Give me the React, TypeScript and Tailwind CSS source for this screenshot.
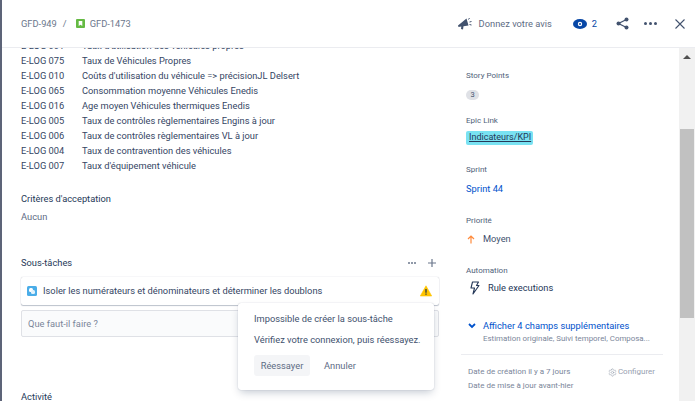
import { Settings } from "lucide-react";

const rows = [
  ["E-LOG 001", "Taux d'utilisation des véhicules propres"],
  ["E-LOG 075", "Taux de Véhicules Propres"],
  ["E-LOG 010", "Coûts d'utilisation du véhicule => précisionJL Delsert"],
  ["E-LOG 065", "Consommation moyenne Véhicules Enedis"],
  ["E-LOG 016", "Age moyen Véhicules thermiques Enedis"],
  ["E-LOG 005", "Taux de contrôles règlementaires Engins à jour"],
  ["E-LOG 006", "Taux de contrôles règlementaires VL à jour"],
  ["E-LOG 004", "Taux de contravention des véhicules"],
  ["E-LOG 007", "Taux d'équipement véhicule"],
];

const FieldLabel = ({ children }: { children: React.ReactNode }) => (
  <div className="text-[8px] leading-[12px] text-[#505f79]">{children}</div>
);

export default function App() {
  return (
    <div className="w-[695px] h-[401px] overflow-hidden flex bg-[#5d6478] font-['Roboto',sans-serif] text-[9.3px] text-[#172b4d]">
      {/* Modal */}
      <div className="ml-[2px] flex-1 flex flex-col bg-white min-w-0">
        {/* Header */}
        <header className="h-[48px] shrink-0 flex items-center pl-[19px] pr-[10px] border-b border-[#ebecf0] bg-white relative z-10">
          <span className="text-[#6b778c]">GFD-949</span>
          <span className="text-[#6b778c] ml-[6px] mr-[9px]">/</span>
          <svg width="9" height="9" viewBox="0 0 9 9" className="mr-[5px]">
            <rect width="9" height="9" rx="1" fill="#65ba43" />
            <path d="M2.700 2h3.600v5L4.500 5.700 2.700 7z" fill="white" />
          </svg>
          <span className="text-[#6b778c]">GFD-1473</span>
          <div className="ml-auto flex items-center">
            <svg width="14" height="13" viewBox="0 0 14 13" className="mr-[7px]">
              <path d="M0 8.500L8.500 1.500 10.500 8.500 5.500 9.300 5 12.500 3 12 3.300 9.600 0.500 10z" fill="#42526e" />
              <path d="M10.500 2.500l1-1.500M11.500 5l2-.5M11.500 7.500l2 .5" stroke="#42526e" fill="none" />
            </svg>
            <span className="text-[#5e6c84]">Donnez votre avis</span>
            <svg width="14" height="10" viewBox="0 0 14 10" className="ml-[21px] mr-[5px]">
              <ellipse cx="7" cy="5" rx="7" ry="5" fill="#0747a6" />
              <circle cx="7" cy="5" r="2.200" fill="white" />
              <circle cx="7" cy="5" r="1" fill="#0747a6" />
            </svg>
            <span className="text-[#0747a6]">2</span>
            <svg width="13" height="13" viewBox="0 0 13 13" className="ml-[19px]">
              <path d="M10.500 2.500L2.500 6.500l8 4" stroke="#42526e" fill="none" strokeWidth="1.300" />
              <circle cx="10.500" cy="2.500" r="2" fill="#42526e" />
              <circle cx="2.500" cy="6.500" r="2" fill="#42526e" />
              <circle cx="10.500" cy="10.500" r="2" fill="#42526e" />
            </svg>
            <div className="ml-[15px] flex gap-[2px]">
              <span className="w-[3px] h-[3px] rounded-full bg-[#42526e]" />
              <span className="w-[3px] h-[3px] rounded-full bg-[#42526e]" />
              <span className="w-[3px] h-[3px] rounded-full bg-[#42526e]" />
            </div>
            <svg width="10" height="10" viewBox="0 0 10 10" className="ml-[18px]">
              <path d="M0.500 0.500l9 9M9.500 0.500l-9 9" stroke="#42526e" strokeWidth="1.100" fill="none" />
            </svg>
          </div>
        </header>

        {/* Body */}
        <div className="flex-1 min-h-0 flex overflow-hidden">
          <main className="w-[440px] shrink-0 pl-[19px] overflow-hidden relative">
            <div className="-mt-[10px]">
              {rows.map(([code, label]) => (
                <div key={code} className="flex h-[15px] items-center leading-[15px] text-[#344563]">
                  <span className="w-[61px]">{code}</span>
                  <span>{label}</span>
                </div>
              ))}
            </div>

            <h3 className="mt-[19px] leading-[14px] text-[#253858]">Critères d'acceptation</h3>
            <p className="mt-[4px] leading-[14px] text-[#5e6c84]">Aucun</p>

            <div className="mt-[32px] w-[418px] flex items-center">
              <h3 className="leading-[14px] text-[#253858]">Sous-tâches</h3>
              <div className="ml-auto flex items-center">
                <div className="flex gap-[1px]">
                  <span className="w-[2px] h-[2px] rounded-full bg-[#6b778c]" />
                  <span className="w-[2px] h-[2px] rounded-full bg-[#6b778c]" />
                  <span className="w-[2px] h-[2px] rounded-full bg-[#6b778c]" />
                </div>
                <svg width="8" height="8" viewBox="0 0 8 8" className="ml-[12px] mr-[3px]">
                  <path d="M4 0v8M0 4h8" stroke="#6b778c" strokeWidth="1.200" />
                </svg>
              </div>
            </div>

            <div className="mt-[7px] w-[418px] h-[28px] flex items-center rounded-[2px] bg-white shadow-[0_1px_1px_rgba(9,30,66,0.25),0_0_1px_rgba(9,30,66,0.31)] pl-[6px] pr-[7px]">
              <svg width="10" height="10" viewBox="0 0 10 10" className="mr-[6px]">
                <rect width="10" height="10" rx="1.500" fill="#4bade8" />
                <rect x="2" y="2" width="4" height="4" rx="1.500" fill="white" />
                <rect x="4" y="4" width="4" height="4" rx="1.500" fill="#e3f3fc" />
              </svg>
              <span className="text-[#344563]">Isoler les numérateurs et dénominateurs et déterminer les doublons</span>
              <svg width="12" height="12" viewBox="0 0 12 12" className="ml-auto">
                <path d="M6 0.800L11.700 11H0.300z" fill="#ffc400" stroke="#ffc400" strokeLinejoin="round" strokeWidth="0.600" />
                <path d="M5.400 4h1.200v3.700H5.400zM5.400 8.500h1.200v1.200H5.400z" fill="#172b4d" />
              </svg>
            </div>

            <div className="mt-[5px] w-[418px] h-[27px] flex items-center rounded-[2px] border border-[#dfe1e6] bg-[#fafbfc] pl-[6px] text-[#7a869a]">
              Que faut-il faire ?
            </div>

            <h3 className="mt-[53px] leading-[14px] text-[#253858]">Activité</h3>

            {/* Error popup */}
            <div className="absolute left-[236px] top-[255px] w-[196px] h-[87px] rounded-[3px] bg-white shadow-[0_4px_8px_-2px_rgba(9,30,66,0.25),0_0_1px_rgba(9,30,66,0.31)] px-[16px] pt-[9px]">
              <div className="leading-[14px] text-[#42526e] whitespace-nowrap">Impossible de créer la sous-tâche</div>
              <div className="mt-[7px] leading-[14px] text-[#42526e] whitespace-nowrap">Vérifiez votre connexion, puis réessayez.</div>
              <div className="mt-[8px] flex items-center">
                <button className="h-[21px] w-[56px] rounded-[3px] bg-[#f4f5f7] text-[#5e6c84]">Réessayer</button>
                <button className="h-[21px] ml-[14px] text-[#5e6c84]">Annuler</button>
              </div>
            </div>
          </main>

          {/* Sidebar */}
          <aside className="flex-1 min-w-0 pl-[24px] relative">
            <div className="mt-[22px]"><FieldLabel>Story Points</FieldLabel></div>
            <div className="mt-[8px] w-[13px] h-[10px] rounded-full bg-[#dfe1e6] flex items-center justify-center text-[7.5px] leading-none text-[#42526e]">3</div>
            <div className="mt-[15px]"><FieldLabel>Epic Link</FieldLabel></div>
            <div className="mt-[4px] w-[67px] h-[14px] rounded-[2px] bg-[#79e2f2] flex items-center px-[3px] text-[9px] text-[#253858] underline whitespace-nowrap">Indicateurs/KPI</div>
            <div className="mt-[19px]"><FieldLabel>Sprint</FieldLabel></div>
            <div className="mt-[6px] leading-[14px] text-[#0052cc]">Sprint 44</div>
            <div className="mt-[19px]"><FieldLabel>Priorité</FieldLabel></div>
            <div className="mt-[5px] flex items-center leading-[14px] text-[#42526e]">
              <svg width="8" height="9" viewBox="0 0 8 9" className="ml-[1px] mr-[8px]">
                <path d="M4 8.500V1M1 4l3-3 3 3" stroke="#ff8b3d" strokeWidth="1.200" fill="none" />
              </svg>
              Moyen
            </div>
            <div className="mt-[19px]"><FieldLabel>Automation</FieldLabel></div>
            <div className="mt-[4px] flex items-center leading-[14px] text-[#253858]">
              <svg width="10" height="14" viewBox="0 0 10 14" className="ml-[4px] mr-[8px]">
                <path d="M2.500 1h6L6.500 4.500H9L3 13l1.500-6H1z" stroke="#253858" strokeWidth="1.100" fill="none" strokeLinejoin="round" />
              </svg>
              Rule executions
            </div>
            <div className="mt-[24px] flex items-center leading-[14px] text-[#0052cc]">
              <svg width="8" height="6" viewBox="0 0 8 6" className="ml-[2px] mr-[7px]">
                <path d="M1 1l3 3 3-3" stroke="#0052cc" strokeWidth="1.800" fill="none" />
              </svg>
              Afficher 4 champs supplémentaires
            </div>
            <div className="pl-[17px] leading-[11px] text-[7.9px] text-[#7a869a] whitespace-nowrap">Estimation originale, Suivi temporel, Composa...</div>
            <div className="mt-[10px] -ml-[5px] w-[202px] border-t border-[#ebecf0]" />
            <div className="mt-[10px] pl-[2px] flex items-center leading-[14px] text-[8px] text-[#7a869a] w-[189px]">
              <span>Date de création il y a 7 jours</span>
              <span className="ml-auto flex items-center text-[#97a0af]">
                <Settings size={9} strokeWidth={1.5} className="mr-[1px]" />
                Configurer
              </span>
            </div>
            <div className="pl-[2px] leading-[14px] text-[8px] text-[#7a869a]">Date de mise à jour avant-hier</div>
          </aside>

          {/* Scrollbar */}
          <div className="w-[16px] shrink-0 bg-[#f1f1f1] flex flex-col items-center">
            <div className="mt-[7px] w-0 h-0 border-x-[4px] border-x-transparent border-b-[4px] border-b-[#505050]" />
            <div className="mt-[70px] w-[14px] h-[189px] bg-[#c1c1c1]" />
          </div>
        </div>
      </div>
    </div>
  );
}
